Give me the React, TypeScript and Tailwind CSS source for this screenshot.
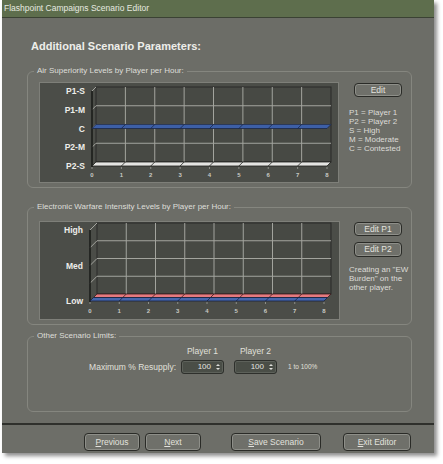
import React from "react";

type Ribbon = { row: number; d0: number; d1: number; fill: string; stroke: string };

function Chart({
  w,
  h,
  d,
  fx0,
  fx1,
  fy0,
  fy1,
  yLabels,
  xLabelY,
  ribbons,
}: {
  w: number;
  h: number;
  d: number;
  fx0: number;
  fx1: number;
  fy0: number;
  fy1: number;
  yLabels: { row: number; text: string }[];
  xLabelY: number;
  ribbons: Ribbon[];
}) {
  const rowY = (r: number) => fy0 + ((fy1 - fy0) * r) / 4;
  const colX = (c: number) => fx0 + ((fx1 - fx0) * c) / 8;
  const cols = [0, 1, 2, 3, 4, 5, 6, 7, 8];

  return (
    <div className="border border-[#7e7f79] bg-[#4b4d48]" style={{ width: w, height: h }}>
      <svg width={w - 2} height={h - 2} viewBox={`1 1 ${w - 2} ${h - 2}`} className="block">
        {/* back wall */}
        <rect x={fx0 + d} y={fy0 - d} width={fx1 - fx0} height={fy1 - fy0} fill="#474944" stroke="#2a2b28" />
        {[1, 2, 3].map((r) => (
          <line key={r} x1={fx0 + d} x2={fx1 + d} y1={rowY(r) - d} y2={rowY(r) - d} stroke="#a3a49e" />
        ))}
        {[1, 2, 3, 4, 5, 6, 7].map((c) => (
          <line key={c} x1={colX(c) + d} x2={colX(c) + d} y1={fy0 - d} y2={fy1 - d} stroke="#a3a49e" />
        ))}
        {[0, 1, 2, 3].map((r) => (
          <line key={r} x1={fx0} y1={rowY(r)} x2={fx0 + d} y2={rowY(r) - d} stroke="#a3a49e" />
        ))}
        <line x1={fx0} x2={fx0} y1={fy0} y2={fy1 + 1} stroke="#151614" strokeWidth={1.4} />
        {ribbons.map((rb, i) => {
          const y = rowY(rb.row);
          const pts = [
            [fx0 + rb.d0, y - rb.d0],
            [fx1 + rb.d0, y - rb.d0],
            [fx1 + rb.d1, y - rb.d1],
            [fx0 + rb.d1, y - rb.d1],
          ]
            .map((p) => p.join(","))
            .join(" ");
          return (
            <g key={i}>
              <polygon points={pts} fill={rb.fill} stroke={rb.stroke} strokeWidth={0.8} />
              {cols.slice(1, 8).map((c) => (
                <line
                  key={c}
                  x1={colX(c) + rb.d0}
                  y1={y - rb.d0}
                  x2={colX(c) + rb.d1}
                  y2={y - rb.d1}
                  stroke={rb.stroke}
                  strokeWidth={0.8}
                />
              ))}
            </g>
          );
        })}
        {cols.map((c) => (
          <line key={c} x1={colX(c)} x2={colX(c)} y1={fy1 + 1} y2={fy1 + 3} stroke="#8d8e88" />
        ))}
        {yLabels.map((l) => (
          <text
            key={l.text}
            x={fx0 - 7}
            y={rowY(l.row) + 3}
            textAnchor="end"
            fontSize={8.5}
            fontWeight="bold"
            fill="#eeeeea"
            fontFamily='"Liberation Sans", Arial, sans-serif'
          >
            {l.text}
          </text>
        ))}
        {cols.map((c) => (
          <text
            key={c}
            x={colX(c)}
            y={xLabelY + 2}
            textAnchor="middle"
            fontSize={6}
            fontWeight="bold"
            fill="#c9cac4"
            fontFamily='"Liberation Sans", Arial, sans-serif'
          >
            {c}
          </text>
        ))}
      </svg>
    </div>
  );
}

function Btn({ label, under, className }: { label: string; under?: boolean; className: string }) {
  return (
    <button
      className={`flex items-center justify-center rounded-[4px] border border-[#2a2b27] bg-[#6f706a] text-[#e2e2de] shadow-[inset_0_0_0_1px_#8e8f89] ${className}`}
    >
      {under ? (
        <span>
          <span className="underline">{label[0]}</span>
          {label.slice(1)}
        </span>
      ) : (
        label
      )}
    </button>
  );
}

function Spin() {
  return (
    <div className="flex h-[14px] w-[43px] items-center justify-end rounded-[3px] border border-[#2e302c] bg-[#4a4e47] pr-[3px] shadow-[inset_0_0_0_1px_#5d615a]">
      <span className="text-[8px] text-[#e4e4e0]">100</span>
      <span className="ml-[5px] flex flex-col items-center gap-[2px]">
        <span className="h-0 w-0 border-x-[2px] border-b-[2px] border-x-transparent border-b-[#e0e0dc]" />
        <span className="h-0 w-0 border-x-[2px] border-t-[2px] border-x-transparent border-t-[#e0e0dc]" />
      </span>
    </div>
  );
}

export default function App() {
  return (
    <div className="h-[464px] w-[443px] bg-white font-['Liberation_Sans',Arial,sans-serif]">
      <div className="ml-[2px] flex h-[453px] w-[432px] flex-col bg-[#6c6d67] shadow-[3px_3px_4px_rgba(0,0,0,0.45)]">
        <div className="h-[18px] border-b border-[#3b4234] bg-[#5e6e4d] pl-[2px] text-[8.5px] leading-[17px] text-[#e6eae0]">
          Flashpoint Campaigns Scenario Editor
        </div>

        <div className="flex-1 pt-[21px]">
          <h1 className="pl-[29px] text-[11px] font-bold leading-[14px] text-[#eeeeea]">
            Additional Scenario Parameters:
          </h1>

          <fieldset className="ml-[25px] mr-[22px] mt-[12px] rounded-[6px] border border-[#85867f] pb-[4px] pt-[5px]">
            <legend className="ml-[6px] px-[3px] text-[8px] leading-[12px] text-[#deded9]">
              Air Superiority Levels by Player per Hour:
            </legend>
            <div className="flex pl-[11px]">
              <Chart
                w={300}
                h={101}
                d={4}
                fx0={53}
                fx1={288}
                fy0={9}
                fy1={84}
                xLabelY={93}
                yLabels={[
                  { row: 0, text: "P1-S" },
                  { row: 1, text: "P1-M" },
                  { row: 2, text: "C" },
                  { row: 3, text: "P2-M" },
                  { row: 4, text: "P2-S" },
                ]}
                ribbons={[
                  { row: 4, d0: 0, d1: 4, fill: "#e4e4e2", stroke: "#1e1f1c" },
                  { row: 2, d0: 0, d1: 4, fill: "#3d5fa6", stroke: "#1b2746" },
                ]}
              />
              <div className="ml-[10px] pt-[1px]">
                <Btn label="Edit" className="ml-[5px] h-[14px] w-[48px] text-[8.5px]" />
                <div className="mt-[11px] text-[8px] leading-[9px] text-[#dcdcd7]">
                  <div>P1 = Player 1</div>
                  <div>P2 = Player 2</div>
                  <div>S = High</div>
                  <div>M = Moderate</div>
                  <div>C = Contested</div>
                </div>
              </div>
            </div>
          </fieldset>

          <fieldset className="ml-[25px] mr-[22px] mt-[13px] rounded-[6px] border border-[#85867f] pb-[4px] pt-[8px]">
            <legend className="ml-[6px] px-[3px] text-[8px] leading-[12px] text-[#deded9]">
              Electronic Warfare Intensity Levels by Player per Hour:
            </legend>
            <div className="flex pl-[11px]">
              <Chart
                w={301}
                h={99}
                d={7}
                fx0={51}
                fx1={285}
                fy0={9}
                fy1={80}
                xLabelY={90}
                yLabels={[
                  { row: 0, text: "High" },
                  { row: 2, text: "Med" },
                  { row: 4, text: "Low" },
                ]}
                ribbons={[
                  { row: 4, d0: 3.5, d1: 7, fill: "#e67a7e", stroke: "#3a1c1e" },
                  { row: 4, d0: 0, d1: 3.5, fill: "#4566ad", stroke: "#18223f" },
                ]}
              />
              <div className="ml-[9px] pt-[1px]">
                <Btn label="Edit P1" className="ml-[5px] h-[14px] w-[48px] text-[8.5px]" />
                <Btn label="Edit P2" className="ml-[5px] mt-[6px] h-[15px] w-[48px] text-[8.5px]" />
                <div className="mt-[8px] text-[8px] leading-[9px] text-[#dcdcd7]">
                  <div>Creating an "EW</div>
                  <div>Burden" on the</div>
                  <div>other player.</div>
                </div>
              </div>
            </div>
          </fieldset>

          <fieldset className="ml-[25px] mr-[22px] mt-[5px] h-[82px] rounded-[6px] border border-[#85867f] pt-[4px]">
            <legend className="ml-[6px] px-[3px] text-[8px] leading-[12px] text-[#deded9]">
              Other Scenario Limits:
            </legend>
            <div className="flex pl-[153px] text-[8.5px] leading-[10px] text-[#e0e0db]">
              <div className="w-[43px] text-center">Player 1</div>
              <div className="ml-[10px] w-[43px] text-center">Player 2</div>
            </div>
            <div className="mt-[4px] flex items-center">
              <div className="w-[148px] text-right text-[8.5px] text-[#e0e0db]">Maximum % Resupply:</div>
              <div className="ml-[5px]">
                <Spin />
              </div>
              <div className="ml-[10px]">
                <Spin />
              </div>
              <div className="ml-[11px] text-[6.5px] text-[#e0e0db]">1 to 100%</div>
            </div>
          </fieldset>
        </div>

        <div className="flex h-[30px] border-t-2 border-[#2f302c] bg-[#6d6e68] pl-[82px] pt-[8px] text-[8.5px]">
          <Btn label="Previous" under className="h-[18px] w-[56px]" />
          <Btn label="Next" under className="ml-[5px] h-[18px] w-[56px]" />
          <Btn label="Save Scenario" under className="ml-[30px] h-[18px] w-[90px]" />
          <Btn label="Exit Editor" under className="ml-[22px] h-[18px] w-[68px]" />
        </div>
      </div>
    </div>
  );
}
